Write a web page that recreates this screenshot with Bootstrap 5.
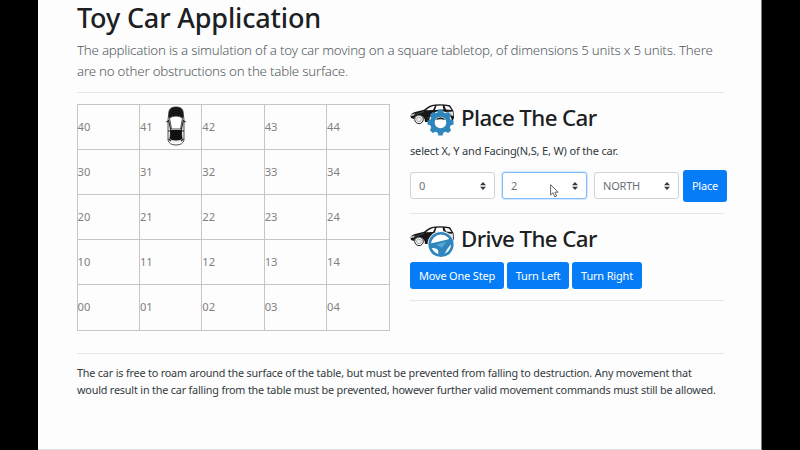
<!DOCTYPE html>
<html lang="en">
<head>
<meta charset="utf-8">
<meta name="viewport" content="width=device-width, initial-scale=1">
<title>Toy Car Application</title>
<link href="https://cdn.jsdelivr.net/npm/bootstrap@5.3.0/dist/css/bootstrap.min.css" rel="stylesheet">
<style>
body{background:#000;font-family:"Noto Sans","Open Sans",sans-serif;font-size:11px;line-height:17px;color:#343a40;height:450px;overflow:hidden}
.sheet{width:724px;height:450px;margin-left:38px;padding:0 37px 0 39px;background:#fdfdfd;border-right:1px solid #777;border-bottom:1px solid #ddd}
h1,h2{color:#1b2023;font-weight:500;margin:0;white-space:nowrap}
h1{font-size:27px;line-height:34px;padding-top:1px;letter-spacing:-.16px}
h2{font-size:22.3px;line-height:28px;letter-spacing:-.6px}
.intro{font-size:13.3px;line-height:21px;font-weight:300;color:#535a60;margin:5px 0 10px;white-space:nowrap;letter-spacing:-.215px}
.rule{height:1px;background:#e6e6e6}
.controls .rule{margin-top:11px}
.panels{padding-top:10.5px;height:260px}
.board{width:313px;height:227px;margin-left:-.5px;border-collapse:collapse;table-layout:fixed;color:#808080;font-size:11.2px}
.board td{border:1px solid #c6c6c6;padding:0 0 1px;height:45.2px;vertical-align:middle}
.board svg{margin-left:13px}
.controls{width:314px}
.heading{height:36px;gap:6px}
.drive{margin-top:11px}
.hint{letter-spacing:-.16px;margin:2px 0 11px;white-space:nowrap}
.picks{height:32px;width:317px;gap:7px}
.pick{width:85px;height:27px;border:1px solid #ced4da;border-radius:3px;background:#fff;color:#6a7178;padding:0 8px;line-height:25px;letter-spacing:-.2px}
.pick.active{border-color:#80bdff;box-shadow:0 0 0 1px #d5e9ff}
.btn,.btn:hover{font-size:11px;line-height:17px;background:#067df7;border:0;border-radius:3px;padding:0;height:27px;white-space:nowrap;letter-spacing:-.18px}
.btn.tall{width:44px;height:32px;margin-left:-3px;flex:none}
.moves{gap:3px;margin-top:1px}
.b-step{width:94px}.b-left{width:62px}.b-right{width:70px}
.notes{font-size:10.8px;letter-spacing:-.178px;margin:10px 0 0;white-space:nowrap}
.pointer{left:550px;top:184px}
</style>
</head>
<body>
<svg width="0" height="0" class="position-absolute" aria-hidden="true">
<defs>
<g id="side-car">
<path d="M.5 12Q1 9 5 8L14 5.800Q19 1 25 .500Q33-.200 40 1.200L43.500 7L44 14L42 18H15Q15 12 9.500 11.500Q5 11 4 15L1 14Z" fill="#171717"/>
<path d="M16 6.300Q20 2.300 25 1.800L23 6Z M26.500 1.800L32.500 1.600L33.500 5.500L25 6Z M34.500 1.700L39 2.400L41.500 6L36 5.500Z" fill="#fff"/>
<path d="M36 8L43 7.500V12L37 10Z" fill="#ddd"/>
<path d="M5 10.500L14 7.500M17 14L30 12" stroke="#777" stroke-width=".5"/>
<path d="M1 10.500L5 9.500L4 11.500L1 12Z" fill="#ccc"/>
<circle cx="9" cy="15.300" r="4.300" fill="#fff" stroke="#222" stroke-width="1"/>
<circle cx="9" cy="15.300" r="2.400" fill="#eee" stroke="#777" stroke-width=".6"/>
</g>
</defs>
</svg>
<main class="sheet">
<h1>Toy Car Application</h1>
<p class="intro">The application is a simulation of a toy car moving on a square tabletop, of dimensions 5 units x 5 units. There<br>are no other obstructions on the table surface.</p>
<div class="rule"></div>
<div class="panels d-flex justify-content-between align-items-start">
<table class="board">
<tr><td>40</td><td><div class="d-flex align-items-center">41
<svg width="20" height="40" viewBox="0 0 20 40">
<path d="M3 5Q4 1 10 1Q16 1 17 5L18 14V34Q17 39 10 39Q3 39 2 34V14Z" fill="#eee" stroke="#555" stroke-width="1"/>
<path d="M3 6Q4 1 10 1Q16 1 17 6L17.500 12Q10 8 2.500 12Z" fill="#171717"/>
<path d="M3.500 12Q10 8 16.500 12L14.500 23H5.500Z" fill="#fff" stroke="#222" stroke-width=".8"/>
<path d="M4.500 24H15.500L16.500 33Q10 36 3.500 33Z" fill="#111"/>
<path d="M2.500 14L4.500 23V31M17.500 14L15.500 23V31M2.500 15L.3 16M17.500 15L19.700 16M2 25H5M15 25H18M2.500 33L5 35M17.500 33L15 35" fill="none" stroke="#222" stroke-width="1.100"/>
<path d="M5 35.500Q10 38 15 35.500V37Q10 39 5 37Z" fill="#fff"/>
</svg></div></td><td>42</td><td>43</td><td>44</td></tr>
<tr><td>30</td><td>31</td><td>32</td><td>33</td><td>34</td></tr>
<tr><td>20</td><td>21</td><td>22</td><td>23</td><td>24</td></tr>
<tr><td>10</td><td>11</td><td>12</td><td>13</td><td>14</td></tr>
<tr><td>00</td><td>01</td><td>02</td><td>03</td><td>04</td></tr>
</table>
<section class="controls">
<div class="heading d-flex">
<svg width="45" height="33" viewBox="0 0 45 33"><use href="#side-car"/>
<g transform="translate(30.500 18.500)"><circle r="11.500" fill="#fdfdfd"/>
<g fill="#2f86bd"><circle r="10.500"/><path id="teeth" d="M-3-10L-2-13H2L3-10V10L2 13H-2L-3 10Z"/><use href="#teeth" transform="rotate(45)"/><use href="#teeth" transform="rotate(90)"/><use href="#teeth" transform="rotate(135)"/></g>
<circle r="5.800" fill="#fff"/><path d="M-4.800-2.500A5.500 5.500 0 0 1 4.800-2.500Q0-4-4.800-2.500Z" fill="#222"/></g></svg>
<h2>Place The Car</h2></div>
<p class="hint">select X, Y and Facing(N,S, E, W) of the car.</p>
<div class="picks d-flex align-items-center">
<div class="pick d-flex align-items-center justify-content-between">0<svg width="6" height="8" viewBox="0 0 6 8"><path d="M0 3.300L3 0L6 3.300ZM0 4.700H6L3 8Z" fill="#343a40"/></svg></div>
<div class="pick active d-flex align-items-center justify-content-between">2<svg width="6" height="8" viewBox="0 0 6 8"><path d="M0 3.300L3 0L6 3.300ZM0 4.700H6L3 8Z" fill="#343a40"/></svg></div>
<div class="pick d-flex align-items-center justify-content-between">NORTH<svg width="6" height="8" viewBox="0 0 6 8"><path d="M0 3.300L3 0L6 3.300ZM0 4.700H6L3 8Z" fill="#343a40"/></svg></div>
<button class="btn btn-primary tall">Place</button>
</div>
<div class="rule"></div>
<div class="heading drive d-flex">
<svg width="45" height="33" viewBox="0 0 45 33"><g transform="translate(0 1)"><use href="#side-car"/></g>
<g transform="translate(31 19.500)"><circle r="13.500" fill="#fdfdfd"/><circle r="11.300" fill="#fff" stroke="#2f86bd" stroke-width="2.600"/>
<path d="M-10.500-1Q-1-3 10.500-6L10.500-1Q6 4 3 10.500H-3Q-2 6-4 4.500Q-7 3-10.500 3.500Z" fill="#2f86bd"/><path d="M-5 .5Q0-1.500 5-2.500L1 3Z" fill="#5da7d3"/></g></svg>
<h2>Drive The Car</h2></div>
<div class="moves d-flex">
<button class="btn btn-primary b-step">Move One Step</button>
<button class="btn btn-primary b-left">Turn Left</button>
<button class="btn btn-primary b-right">Turn Right</button>
</div>
<div class="rule"></div>
</section>
</div>
<div class="rule"></div>
<p class="notes">The car is free to roam around the surface of the table, but must be prevented from falling to destruction. Any movement that<br>would result in the car falling from the table must be prevented, however further valid movement commands must still be allowed.</p>
</main>
<svg class="pointer position-absolute" width="9" height="14" viewBox="0 0 9 14"><path d="M.6.7V11L3 8.700L4.800 12.800L6.600 12L4.900 8.200H8.200Z" fill="#fff" stroke="#555" stroke-width=".9"/></svg>
<script src="https://cdn.jsdelivr.net/npm/bootstrap@5.3.0/dist/js/bootstrap.bundle.min.js"></script>
</body>
</html>
